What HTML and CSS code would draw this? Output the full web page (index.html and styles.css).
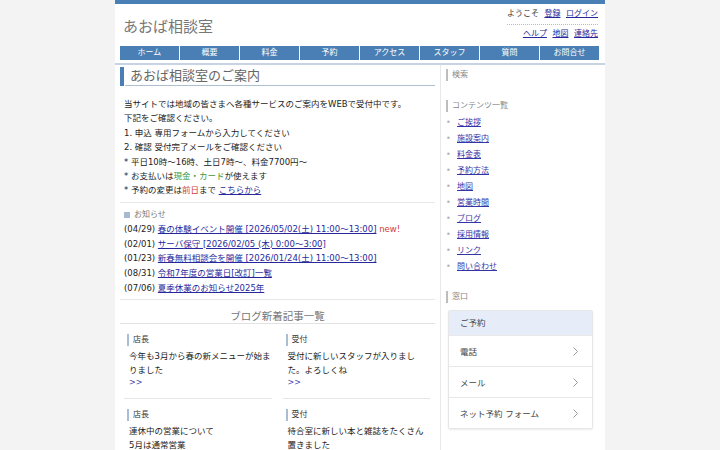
FILE: index.html
```html
<!DOCTYPE html>
<html lang="ja">
<head>
  <meta charset="UTF-8">
  <title>あおば相談室</title>
  <link rel="stylesheet" href="styles.css">
</head>
<body>
  <div class="page">
    <div class="header">
      <h1 class="site-title">あおば相談室</h1>
      <div class="header-links">
        <div class="top">ようこそ <a href="#">登録</a> <a href="#">ログイン</a></div>
        <div class="bottom"><a href="#">ヘルプ</a> <a href="#">地図</a> <a href="#">連絡先</a></div>
      </div>
    </div>

    <div class="nav">
      <a href="#">ホーム</a>
      <a href="#">概要</a>
      <a href="#">料金</a>
      <a href="#">予約</a>
      <a href="#">アクセス</a>
      <a href="#">スタッフ</a>
      <a href="#">質問</a>
      <a href="#">お問合せ</a>
    </div>

    <div class="content">
      <div class="main">
        <div class="sec-title"><h2>あおば相談室のご案内</h2></div>

        <div class="intro">
          当サイトでは地域の皆さまへ各種サービスのご案内をWEBで受付中です。<br>
          下記をご確認ください。<br>
          1. 申込 専用フォームから入力してください<br>
          2. 確認 受付完了メールをご確認ください<br>
          * 平日10時〜16時、土日7時〜、料金7700円〜<br>
          * お支払いは<span class="green">現金・カード</span>が使えます<br>
          * 予約の変更は<span class="red">前日</span>まで <a href="#">こちらから</a>
        </div>

        <div class="news">
          <div class="news-title"><span class="square"></span>お知らせ</div>
          <ul class="news-list">
            <li>(04/29) <a href="#">春の体験イベント開催 [2026/05/02(土) 11:00〜13:00]</a> <span class="new">new!</span></li>
            <li>(02/01) <a href="#">サーバ保守 [2026/02/05 (木) 0:00〜3:00]</a></li>
            <li>(01/23) <a href="#">新春無料相談会を開催 [2026/01/24(土) 11:00〜13:00]</a></li>
            <li>(08/31) <a href="#">令和7年度の営業日[改訂]一覧</a></li>
            <li>(07/06) <a href="#">夏季休業のお知らせ2025年</a></li>
          </ul>
        </div>

        <h3 class="blog-title">ブログ新着記事一覧</h3>
        <div class="cards">
          <div class="card">
            <div class="card-title">店長</div>
            <div class="card-text">今年も3月から春の新メニューが始まりました</div>
            <a class="more" href="#">&gt;&gt;</a>
          </div>
          <div class="card">
            <div class="card-title">受付</div>
            <div class="card-text">受付に新しいスタッフが入りました。よろしくね</div>
            <a class="more" href="#">&gt;&gt;</a>
          </div>
          <div class="card">
            <div class="card-title">店長</div>
            <div class="card-text">連休中の営業について<br>5月は通常営業</div>
          </div>
          <div class="card">
            <div class="card-title">受付</div>
            <div class="card-text">待合室に新しい本と雑誌をたくさん置きました</div>
          </div>
        </div>
      </div>

      <div class="sidebar">
        <h3 class="side-title">検索</h3>
        <div class="side-blank"></div>
        <h3 class="side-title">コンテンツ一覧</h3>
        <ul class="side-list">
          <li><a href="#">ご挨拶</a></li>
          <li><a href="#">施設案内</a></li>
          <li><a href="#">料金表</a></li>
          <li><a href="#">予約方法</a></li>
          <li><a href="#">地図</a></li>
          <li><a href="#">営業時間</a></li>
          <li><a href="#">ブログ</a></li>
          <li><a href="#">採用情報</a></li>
          <li><a href="#">リンク</a></li>
          <li><a href="#">問い合わせ</a></li>
        </ul>
        <h3 class="side-title side-gap">窓口</h3>
        <div class="menu-box">
          <div class="menu-head">ご予約</div>
          <a class="menu-row" href="#">電話<svg width="5" height="9" viewBox="0 0 5 9"><path d="M0.5 0.5 L4.5 4.5 L0.5 8.5" stroke="#9a9a9a" fill="none"/></svg></a>
          <a class="menu-row" href="#">メール<svg width="5" height="9" viewBox="0 0 5 9"><path d="M0.5 0.5 L4.5 4.5 L0.5 8.5" stroke="#9a9a9a" fill="none"/></svg></a>
          <a class="menu-row" href="#">ネット予約 フォーム<svg width="5" height="9" viewBox="0 0 5 9"><path d="M0.5 0.5 L4.5 4.5 L0.5 8.5" stroke="#9a9a9a" fill="none"/></svg></a>
        </div>
      </div>
    </div>
  </div>
</body>
</html>
```

FILE: styles.css
```css
body {
  margin: 0;
  background: #f3f3f3;
  font-family: "DejaVu Sans", "Noto Sans CJK JP", sans-serif;
  font-size: 8.5px;
  color: #333;
}
a {
  color: #28289c;
}
ul {
  list-style: none;
  margin: 0;
  padding: 0;
}
.page {
  width: 490px;
  min-height: 446px;
  margin: 0 auto;
  background: #fff;
  border-top: 4px solid #4a7fb5;
}
.header {
  display: flex;
  justify-content: space-between;
  align-items: center;
  height: 42px;
  padding: 0 7px 0 8px;
}
.site-title {
  margin: 0;
  font-size: 15px;
  font-weight: normal;
  color: #777;
}
.header-links {
  align-self: flex-start;
  padding-top: 4px;
  text-align: right;
  font-size: 8px;
  line-height: 12px;
}
.header-links .top {
  border-bottom: 1px dotted #bbb;
  padding-bottom: 4px;
}
.header-links .bottom {
  padding-top: 3px;
}
.header-links a {
  margin-left: 3px;
}
.nav {
  display: grid;
  grid-template-columns: repeat(8, 1fr);
  gap: 1px;
  margin: 0 6px 3px 5px;
}
.nav a {
  background: #4a7fb5;
  color: #fff;
  text-decoration: none;
  text-align: center;
  font-size: 8px;
  line-height: 14px;
}
.content {
  display: flex;
  border-top: 2px solid #c6d4e4;
}
.main {
  width: 315px;
  padding: 0 5px;
}
.sec-title {
  margin-top: 2px;
  border-left: 4px solid #4a7fb5;
}
.sec-title h2 {
  margin: 0 0 0 1px;
  padding-left: 5px;
  font-size: 13px;
  font-weight: normal;
  line-height: 18px;
  color: #666;
  border-bottom: 1px solid #aebfd2;
}
.intro {
  margin-top: 11px;
  padding: 0 0 4px 4px;
  line-height: 14.4px;
  color: #222;
  border-bottom: 1px solid #e8e8e8;
}
.green {
  color: #3c9a3c;
}
.red {
  color: #d03a3a;
}
.news {
  margin-top: 5px;
  padding: 0 0 4px 4px;
  border-bottom: 1px solid #e8e8e8;
}
.news-title {
  display: flex;
  align-items: center;
  gap: 4px;
  line-height: 14px;
  font-size: 8px;
  color: #777;
}
.square {
  width: 6px;
  height: 6px;
  background: #a9b9d0;
}
.news-list li {
  line-height: 14.7px;
  color: #222;
}
.new {
  color: #d03a3a;
}
.blog-title {
  margin: 9px 0 0;
  text-align: center;
  font-size: 10.5px;
  font-weight: normal;
  line-height: 14px;
  color: #777;
  border-bottom: 1px solid #e2e2e2;
}
.cards {
  display: grid;
  grid-template-columns: 1fr 1fr;
  column-gap: 11px;
  padding: 0 5px 0 4px;
}
.card {
  padding: 10px 0;
  border-bottom: 1px solid #e6e6e6;
}
.card-title {
  margin-left: 3px;
  padding-left: 4px;
  border-left: 2px solid #a9bdd4;
  font-size: 8px;
  line-height: 12px;
  color: #333;
}
.card-text {
  margin-top: 4px;
  padding-left: 5px;
  line-height: 13.5px;
  color: #222;
}
.more {
  display: block;
  padding-left: 5px;
  font-size: 8px;
  line-height: 11px;
  color: #4646aa;
  text-decoration: none;
}
.sidebar {
  flex: 1;
  padding: 4px 0 0 5px;
  border-left: 1px solid #e8e8e8;
}
.side-title {
  margin: 0;
  padding-left: 4px;
  border-left: 2px solid #bdbdbd;
  font-size: 8px;
  font-weight: normal;
  line-height: 12px;
  color: #888;
}
.side-blank {
  height: 19px;
}
.side-list {
  margin-top: 3px;
}
.side-list li {
  display: flex;
  line-height: 16px;
  font-size: 8px;
}
.side-list li::before {
  content: "•";
  width: 11px;
  color: #b5b5b5;
}
.side-list a {
  color: #3434a8;
}
.side-gap {
  margin-top: 16px;
}
.menu-box {
  width: 143px;
  margin: 7px 0 0 2px;
  border: 1px solid #e6e6e6;
  border-radius: 2px;
  box-shadow: 0 1px 2px rgba(0, 0, 0, 0.08);
}
.menu-head {
  height: 24px;
  padding-left: 11px;
  line-height: 24px;
  background: #e6edf8;
  color: #444;
}
.menu-row {
  display: flex;
  justify-content: space-between;
  align-items: center;
  height: 30px;
  padding: 0 14px 0 11px;
  border-top: 1px solid #e8e8e8;
  color: #444;
  text-decoration: none;
}
```
